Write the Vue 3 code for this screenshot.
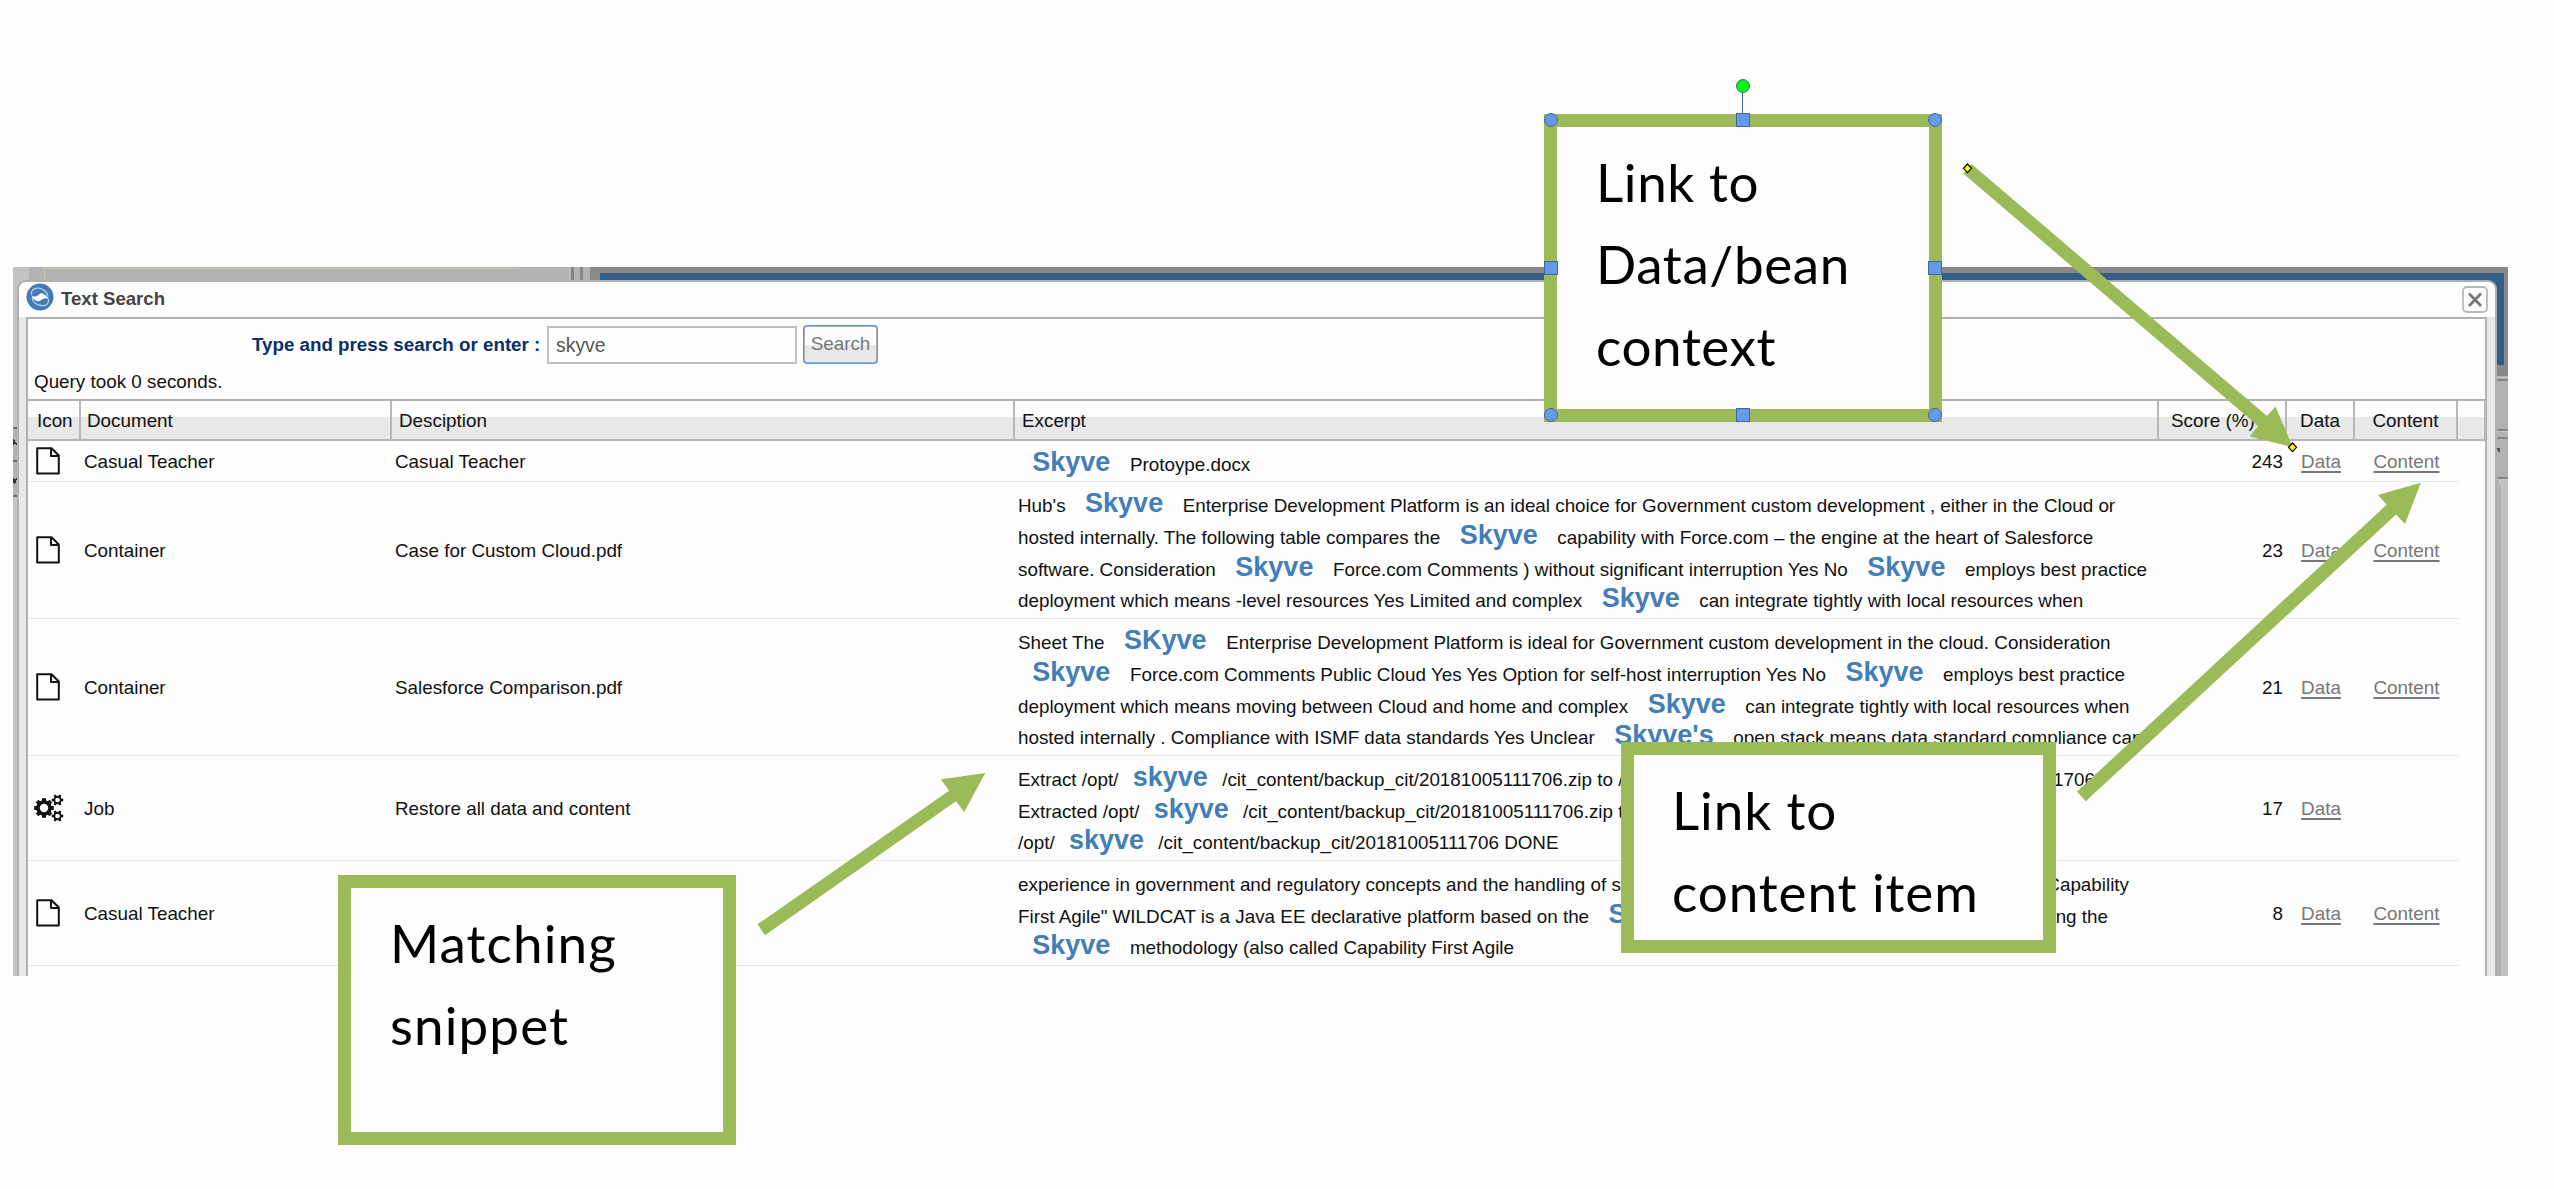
<script setup>
const rows = [
  {
    icon: 'doc', doc: 'Casual Teacher', desc: 'Casual Teacher', score: 243, content: true, h: 41,
    lines: [[['*Skyve', ' Protoype.docx']]],
  },
  {
    icon: 'doc', doc: 'Container', desc: 'Case for Custom Cloud.pdf', score: 23, content: true, h: 137,
    lines: [
      [["Hub's ", '*Skyve', ' Enterprise Development Platform is an ideal choice for Government custom development , either in the Cloud or']],
      [['hosted internally. The following table compares the ', '*Skyve', ' capability with Force.com – the engine at the heart of Salesforce']],
      [['software. Consideration ', '*Skyve', ' Force.com Comments ) without significant interruption Yes No ', '*Skyve', ' employs best practice']],
      [['deployment which means -level resources Yes Limited and complex ', '*Skyve', ' can integrate tightly with local resources when']],
    ],
  },
  {
    icon: 'doc', doc: 'Container', desc: 'Salesforce Comparison.pdf', score: 21, content: true, h: 137,
    lines: [
      [['Sheet The ', '*SKyve', ' Enterprise Development Platform is ideal for Government custom development in the cloud. Consideration']],
      [['*Skyve', ' Force.com Comments Public Cloud Yes Yes Option for self-host interruption Yes No ', '*Skyve', ' employs best practice']],
      [['deployment which means moving between Cloud and home and complex ', '*Skyve', ' can integrate tightly with local resources when']],
      [['hosted internally . Compliance with ISMF data standards Yes Unclear ', "*Skyve's", ' open stack means data standard compliance can']],
    ],
  },
  {
    icon: 'gears', doc: 'Job', desc: 'Restore all data and content', score: 17, content: false, h: 105,
    lines: [
      [['Extract /opt/', '*skyve', '/cit_content/backup_cit/20181005111706.zip to /'], ['/20181005111706']],
      [['Extracted /opt/', '*skyve', '/cit_content/backup_cit/20181005111706.zip to']],
      [['/opt/', '*skyve', '/cit_content/backup_cit/20181005111706 DONE']],
    ],
  },
  {
    icon: 'doc', doc: 'Casual Teacher', desc: '', score: 8, content: true, h: 105,
    lines: [
      [['experience in government and regulatory concepts and the handling of se'], ['Capability']],
      [['First Agile" WILDCAT is a Java EE declarative platform based on the ', '*Skyve'], ['using the']],
      [['*Skyve', ' methodology (also called Capability First Agile']],
    ],
  },
]
const lineWidths = { 3: [1077], 4: [1111, 1090] }
const notes = [
  { cls: 'n1', lines: ['Link to', 'Data/bean', 'context'] },
  { cls: 'n2', lines: ['Link to', 'content item'] },
  { cls: 'n3', lines: ['Matching', 'snippet'] },
]
const teeth = [0, 45, 90, 135, 180, 225, 270, 315]
</script>

<template>
  <div class="page">
    <div class="screen">
      <svg class="backdrop" width="2495" height="709" shape-rendering="crispEdges">
        <rect width="2495" height="709" fill="#b1b2b4" />
        <rect width="16" height="709" fill="#c3c3c3" />
        <rect y="160" width="6" height="70" fill="#b1b2b4" />
        <path d="M31 14V3M31 1.500H507" stroke="#c9cba6" fill="none" />
        <path d="M0 160.500H5M0 194H5M0 228.500H5" stroke="#6d6d6f" stroke-width="2" />
        <path d="M0 171l2 3l2 3v2l-2-3l-2 2zM0 211l2 2l2-3v2l-2 5l-2-1z" fill="#333" />
        <path d="M559 0V14M568.500 0V14" stroke="#858585" stroke-width="3" />
        <path d="M556 0V14" stroke="#c8c8c8" />
        <rect x="577" width="1918" height="109" fill="#888" />
        <rect x="587" y="6" width="1904" height="92" fill="#335c87" />
        <path d="M2484 113H2495M2484 162.500H2495M2484 171H2495M2484 210.500H2495" stroke="#858585" stroke-width="2" />
        <path d="M2484 110H2495M2484 164.500H2495M2484 212H2495" stroke="#c8c8c8" />
        <rect x="2486" y="213" width="9" height="500" fill="#c3c3c3" />
        <rect x="2484" y="218" width="4" height="500" fill="#b1b2b4" />
        <path d="M2484 181h3v4h-2z" fill="#555" />
      </svg>
      <div class="modal">
        <div class="titlebar">
          <svg class="logo" width="28" height="28" viewBox="0 0 28 28">
            <circle cx="14" cy="14" r="13.500" fill="#437cb5" />
            <g fill="none" stroke="#c9dcec" stroke-width="1.100">
              <path d="M5.500 11.500Q5 6 10 5.200T19.500 8.500Q21.500 10.500 22 13.500" />
              <path d="M6 15Q7 19.500 11.500 21.500T20 22Q23 20.500 22.300 16" />
            </g>
            <path d="M5.500 12.500Q9 15 12.500 12T18 11.500Q20.500 12 22.500 16Q19 14 15.500 16.800T9.500 17.200Q7 16.500 5.500 12.500z" fill="#fff" />
          </svg>
          <span class="title">Text Search</span>
          <svg class="close" width="26" height="27" viewBox="0 0 26 27">
            <rect x="1" y="1" width="24" height="25" rx="4" fill="#fbfbfb" stroke="#b9b9b9" stroke-width="1.800" />
            <path d="M7 7.500L19 20M19 7.500L7 20" stroke="#777" stroke-width="2.600" />
          </svg>
        </div>
        <div class="body">
          <div class="search">
            <span class="label">Type and press search or enter :</span>
            <span class="input">skyve</span>
            <span class="button">Search</span>
          </div>
          <div class="query">Query took 0 seconds.</div>
          <div class="grid">
            <div class="row head">
              <div class="c-icon">Icon</div><div class="c-doc">Document</div><div class="c-desc">Desciption</div>
              <div class="c-exc">Excerpt</div><div class="c-score">Score (%)</div><div class="c-data">Data</div>
              <div class="c-cont">Content</div><div class="c-end"></div>
            </div>
            <div v-for="(r, i) in rows" :key="i" class="row item" :style="{ height: r.h + 'px' }">
              <div class="c-icon">
                <svg v-if="r.icon === 'doc'" width="24" height="28" viewBox="0 0 24 28">
                  <path d="M1.200 1.200H15.500L22.800 8.500V26.600H1.200zM15 1.500V9H22.500" fill="none" stroke="#111" stroke-width="2" stroke-linejoin="round" />
                </svg>
                <svg v-else class="gears" width="30" height="28" viewBox="0 0 30 28" fill="none" stroke="#111">
                  <g transform="translate(10 14)">
                    <circle r="6" stroke-width="3.600" />
                    <path v-for="t in teeth" :key="t" d="M0 -6.500V-9.800" stroke-width="4" :transform="`rotate(${t})`" />
                  </g>
                  <g v-for="y in [6, 22]" :key="y" :transform="`translate(23.500 ${y})`">
                    <circle r="3.300" stroke-width="1.900" />
                    <path v-for="t in [30, 90, 150, 210, 270, 330]" :key="t" d="M0 -3.600V-5.800" stroke-width="2.400" :transform="`rotate(${t})`" />
                  </g>
                </svg>
              </div>
              <div class="c-doc">{{ r.doc }}</div>
              <div class="c-desc">{{ r.desc }}</div>
              <div class="c-exc">
                <div v-for="(l, j) in r.lines" :key="j" class="line" :style="{ width: (lineWidths[i]?.[j] ?? 1120) + 'px' }">
                  <div v-for="(part, k) in l" :key="k" class="part"><template v-for="(s, m) in part" :key="m"><b v-if="s[0] === '*'">{{ s.slice(1) }}</b><span v-else>{{ s }}</span></template></div>
                </div>
              </div>
              <div class="c-score">{{ r.score }}</div>
              <div class="c-data"><a>Data</a></div>
              <div class="c-cont"><a v-if="r.content">Content</a></div>
            </div>
          </div>
        </div>
      </div>
    </div>

    <svg class="arrows" width="2554" height="1189">
      <g fill="#9bbb59">
        <path d="M1971.500 164L2267 416L2275.500 406.500L2292.500 447L2249.700 436.500L2258 426L1963.300 173.500z" />
        <path d="M2077 791.500L2386.700 504.700L2378 495L2420.800 482.700L2405 524L2396 514.500L2085.700 801.300z" />
        <path d="M757.500 924.300L949 790.700L941 779.300L985.300 773L964.200 812L955.900 801.300L765 935.300z" />
      </g>
      <g fill="#ff0" stroke="#000" stroke-width="1.200">
        <path d="M1967.500 164l4 4.300l-4 4.300l-4-4.300zM2292.500 443l4 4.300l-4 4.300l-4-4.300z" />
      </g>
    </svg>

    <div v-for="n in notes" :key="n.cls" class="note" :class="n.cls">
      <div v-for="t in n.lines" :key="t"><span>{{ t }}</span></div>
    </div>

    <svg class="arrows" width="2554" height="1189">
      <g fill="#6699e8" stroke="#3f67a5">
        <path d="M1742.500 92V113" />
        <circle cx="1743" cy="86" r="6.500" fill="#0f0" />
        <circle v-for="p in [[1551, 120], [1935, 120], [1551, 415], [1935, 415]]" :key="p.join()" :cx="p[0]" :cy="p[1]" r="6.500" />
        <rect v-for="p in [[1743, 120], [1551, 268], [1935, 268], [1743, 415]]" :key="p.join()" :x="p[0] - 6.500" :y="p[1] - 6.500" width="13" height="13" />
      </g>
    </svg>
  </div>
</template>

<style>
body { margin: 0; background: #fdfdfd; }
</style>

<style scoped>
.page { position: relative; width: 2554px; height: 1189px; overflow: hidden; background: #fdfdfd; display: flex; flex-direction: column; font-family: "Liberation Sans", Arial, sans-serif; font-size: 18.840px; color: #111; white-space: pre; }
.screen { position: relative; margin: 267px 0 0 13px; width: 2495px; height: 709px; overflow: hidden; display: flex; }
.backdrop, .arrows { position: absolute; left: 0; top: 0; }
.modal { position: relative; box-sizing: border-box; margin: 13px 11px 0 4px; width: 2480px; height: 710px; border: 2px solid #b0b0b0; border-radius: 9px 9px 0 0; background: #e8e8e8; display: flex; flex-direction: column; }
.titlebar { box-sizing: border-box; height: 35px; background: #fdfdfd; border-radius: 8px 8px 0 0; display: flex; align-items: center; padding: 0 7px 4px 7px; }
.logo { flex: none; margin-top: -1px; }
.title { margin-left: 7px; padding-top: 3px; font-size: 18.600px; font-weight: bold; color: #444; flex: 1; }
.close { margin-top: 4px; }
.body { flex: 1; margin: 0 8px 0 7px; box-sizing: border-box; border: solid #b0b0b0; border-width: 2px 2px 0 2px; background: #fdfdfd; display: flex; flex-direction: column; }
.search { display: flex; align-items: center; height: 51px; padding-left: 224px; }
.label { width: 289px; font-weight: bold; color: #0b2f66; font-size: 18.750px; }
.input { box-sizing: border-box; margin-left: 6px; width: 250px; height: 38px; border: 2px solid #c0c0c0; padding-left: 7px; line-height: 34px; font-size: 19.400px; color: #555; background: #fefefe; }
.button { box-sizing: border-box; margin-left: 6px; width: 75px; height: 39px; border: 2px solid #aaa; outline: 1px solid #5b9bee; outline-offset: -1px; border-radius: 4px; text-align: center; line-height: 34px; color: #777; background: linear-gradient(#fdfdfd 50%, #e8e8e8 50%); }
.query { height: 29px; line-height: 23px; padding-left: 6px; }
.grid { border-top: 2px solid #b0b0b0; display: flex; flex-direction: column; }
.row { display: flex; box-sizing: border-box; align-items: center; }
.row > div { box-sizing: border-box; flex: none; }
.head { height: 40px; border-bottom: 2px solid #b5b5b5; background: linear-gradient(#fdfdfd 16px, #e8e8e8 16px); width: 2458px; }
.head > div { height: 38px; line-height: 39px; border-right: 2px solid #b8b8b8; padding-left: 7px; }
.item { width: 2430px; border-bottom: 1px solid #e6e6e6; }
.c-icon { width: 53px; }
.c-doc { width: 311px; }
.c-desc { width: 623px; }
.c-exc { width: 1144px; }
.c-score { width: 128px; text-align: right; }
.c-data { width: 68px; text-align: center; }
.c-cont { width: 103px; text-align: center; }
.c-end { width: 28px; }
.head .c-icon { padding-left: 9px; }
.head .c-doc { padding-left: 6px; }
.item .c-icon { padding-left: 8px; display: flex; }
.item .gears { margin-left: -2px; }
.item .c-doc, .item .c-desc, .item .c-exc { padding-left: 3px; }
.item .c-doc, .item .c-desc, .item .c-score, .item .c-data, .item .c-cont { padding-top: 1px; }
.item .c-exc { padding-top: 7px; }
.item .c-score { padding-right: 4px; }
.head .c-score { padding-left: 12px; text-align: left; }
.head .c-data, .head .c-cont { padding-left: 0; }
.line { height: 31.650px; line-height: 31.650px; display: flex; justify-content: space-between; }
.part b { font-size: 27px; line-height: 20px; color: #437eb7; padding: 0 14.300px; }
a { color: #777; text-decoration: underline; text-underline-offset: 3px; text-decoration-thickness: 1.500px; }
.note { position: absolute; box-sizing: border-box; border: 13px solid #9bbb59; background: #fdfdfd; font-family: Lato, sans-serif; font-size: 53px; line-height: 82px; color: #000; }
.n1 { left: 1544px; top: 114px; width: 398px; height: 308px; padding: 14px 0 0 39px; letter-spacing: 0.600px; }
.n2 { left: 1621px; top: 742px; width: 435px; height: 211px; padding: 14px 0 0 38px; letter-spacing: 0.900px; }
.n3 { left: 338px; top: 875px; width: 398px; height: 270px; padding: 14px 0 0 39px; letter-spacing: 1.100px; }
</style>
